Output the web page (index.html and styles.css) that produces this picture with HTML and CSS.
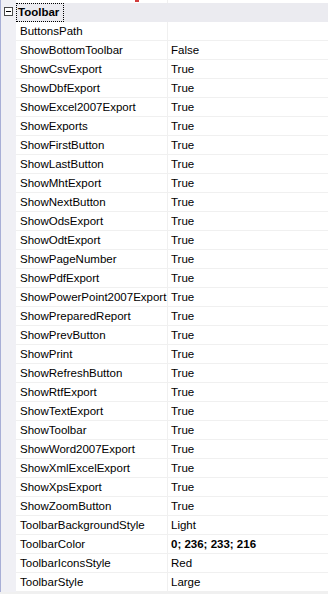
FILE: index.html
```html
<!DOCTYPE html>
<html lang="en-US">
  <head>
    <meta charset="utf-8">
    <meta name="viewport" content="width=device-width, initial-scale=1.0">
    <title>Properties</title>
    <link rel="stylesheet" href="styles.css">
  </head>
  <body>

    <div class="grid">
      <!-- tail of the row above, scrolled off -->
      <div class="row partial">
        <div class="gutter"></div>
        <div class="name"><span class="red-tail"></span></div>
        <div class="value"></div>
      </div>

      <!-- Category header -->
      <div class="row category">
        <div class="gutter"><span class="toggle"></span></div>
        <div class="cat-title"><span class="focus">Toolbar</span></div>
      </div>

      <div class="row"><div class="gutter"></div><div class="name">ButtonsPath</div><div class="value"></div></div>
      <div class="row"><div class="gutter"></div><div class="name">ShowBottomToolbar</div><div class="value">False</div></div>
      <div class="row"><div class="gutter"></div><div class="name">ShowCsvExport</div><div class="value">True</div></div>
      <div class="row"><div class="gutter"></div><div class="name">ShowDbfExport</div><div class="value">True</div></div>
      <div class="row"><div class="gutter"></div><div class="name">ShowExcel2007Export</div><div class="value">True</div></div>
      <div class="row"><div class="gutter"></div><div class="name">ShowExports</div><div class="value">True</div></div>
      <div class="row"><div class="gutter"></div><div class="name">ShowFirstButton</div><div class="value">True</div></div>
      <div class="row"><div class="gutter"></div><div class="name">ShowLastButton</div><div class="value">True</div></div>
      <div class="row"><div class="gutter"></div><div class="name">ShowMhtExport</div><div class="value">True</div></div>
      <div class="row"><div class="gutter"></div><div class="name">ShowNextButton</div><div class="value">True</div></div>
      <div class="row"><div class="gutter"></div><div class="name">ShowOdsExport</div><div class="value">True</div></div>
      <div class="row"><div class="gutter"></div><div class="name">ShowOdtExport</div><div class="value">True</div></div>
      <div class="row"><div class="gutter"></div><div class="name">ShowPageNumber</div><div class="value">True</div></div>
      <div class="row"><div class="gutter"></div><div class="name">ShowPdfExport</div><div class="value">True</div></div>
      <div class="row"><div class="gutter"></div><div class="name">ShowPowerPoint2007Export</div><div class="value">True</div></div>
      <div class="row"><div class="gutter"></div><div class="name">ShowPreparedReport</div><div class="value">True</div></div>
      <div class="row"><div class="gutter"></div><div class="name">ShowPrevButton</div><div class="value">True</div></div>
      <div class="row"><div class="gutter"></div><div class="name">ShowPrint</div><div class="value">True</div></div>
      <div class="row"><div class="gutter"></div><div class="name">ShowRefreshButton</div><div class="value">True</div></div>
      <div class="row"><div class="gutter"></div><div class="name">ShowRtfExport</div><div class="value">True</div></div>
      <div class="row"><div class="gutter"></div><div class="name">ShowTextExport</div><div class="value">True</div></div>
      <div class="row"><div class="gutter"></div><div class="name">ShowToolbar</div><div class="value">True</div></div>
      <div class="row"><div class="gutter"></div><div class="name">ShowWord2007Export</div><div class="value">True</div></div>
      <div class="row"><div class="gutter"></div><div class="name">ShowXmlExcelExport</div><div class="value">True</div></div>
      <div class="row"><div class="gutter"></div><div class="name">ShowXpsExport</div><div class="value">True</div></div>
      <div class="row"><div class="gutter"></div><div class="name">ShowZoomButton</div><div class="value">True</div></div>
      <div class="row"><div class="gutter"></div><div class="name">ToolbarBackgroundStyle</div><div class="value">Light</div></div>
      <div class="row"><div class="gutter"></div><div class="name">ToolbarColor</div><div class="value changed">0; 236; 233; 216</div></div>
      <div class="row"><div class="gutter"></div><div class="name">ToolbarIconsStyle</div><div class="value">Red</div></div>
      <div class="row"><div class="gutter"></div><div class="name">ToolbarStyle</div><div class="value">Large</div></div>
    </div>

  </body>
</html>
```

FILE: styles.css
```css
body {
  margin: 0;
  background-color: #f0f0f0;
  font-family: 'Liberation Sans', Arial, sans-serif;
  font-size: 11.5px;
  color: #000;
}

.grid {
  width: 328px;
  background-color: #fff;
}

.row {
  display: grid;
  grid-template-columns: 16px 152px 160px;
  height: 19px;
}

.gutter {
  background-color: #f0f0f5;
  border-left: 1px solid #a8afd6;
  position: relative;
}

.name, .value {
  border-bottom: 1px solid #f0f0f0;
  line-height: 18px;
  white-space: nowrap;
  overflow: hidden;
}

.name {
  padding-left: 4px;
  border-right: 1px solid #f0f0f0;
}

.value {
  padding-left: 3px;
}

.value.changed {
  font-weight: bold;
}

/* partially visible row at the top */
.row.partial {
  height: 3px;
}

.row.partial .name, .row.partial .value {
  border-bottom: none;
}

.red-tail {
  display: block;
  width: 4px;
  height: 2px;
  margin-left: 115px;
  background-color: #d23c3c;
}

/* category row */
.cat-title {
  grid-column: 2 / 4;
  background-color: #ebebf0;
  height: 19px;
}

.focus {
  display: inline-block;
  height: 17px;
  line-height: 17px;
  padding: 0 4px 0 1px;
  border: 1px dotted #000;
  font-weight: bold;
}

.toggle {
  position: absolute;
  left: 3px;
  top: 4px;
  width: 7px;
  height: 7px;
  border: 1px solid #4a4a4a;
  background-color: #fff;
}

.toggle::after {
  content: "";
  position: absolute;
  left: 1px;
  top: 3px;
  width: 5px;
  height: 1px;
  background-color: #000;
}
```
